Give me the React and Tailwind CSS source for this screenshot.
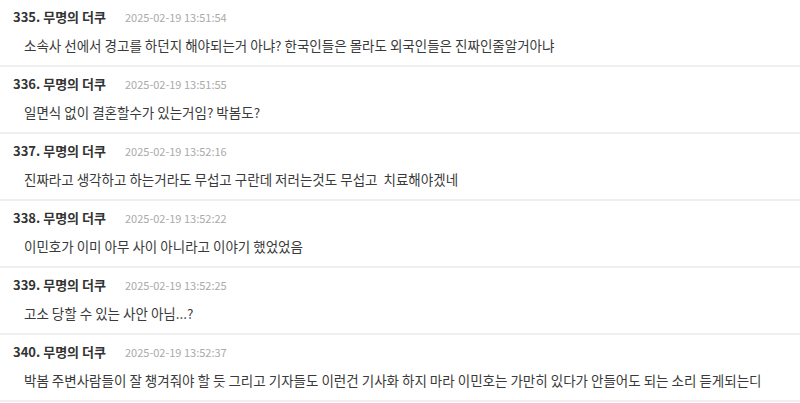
const comments = [
  { no: 335, time: "2025-02-19 13:51:54", text: "소속사 선에서 경고를 하던지 해야되는거 아냐? 한국인들은 몰라도 외국인들은 진짜인줄알거아냐" },
  { no: 336, time: "2025-02-19 13:51:55", text: "일면식 없이 결혼할수가 있는거임? 박봄도?" },
  { no: 337, time: "2025-02-19 13:52:16", text: "진짜라고 생각하고 하는거라도 무섭고 구란데 저러는것도 무섭고  치료해야겠네" },
  { no: 338, time: "2025-02-19 13:52:22", text: "이민호가 이미 아무 사이 아니라고 이야기 했었었음" },
  { no: 339, time: "2025-02-19 13:52:25", text: "고소 당할 수 있는 사안 아님...?" },
  { no: 340, time: "2025-02-19 13:52:37", text: "박봄 주변사람들이 잘 챙겨줘야 할 듯 그리고 기자들도 이런건 기사화 하지 마라 이민호는 가만히 있다가 안들어도 되는 소리 듣게되는디" },
];

export default function App() {
  return (
    <div
      className="w-[800px] h-[403px] overflow-hidden bg-white"
      style={{ fontFamily: '"Noto Sans CJK KR", "Noto Sans", sans-serif' }}
    >
      {comments.map((c) => (
        <div key={c.no} className="border-b-2 border-[#efefef] pt-[9px] pb-[10px]">
          <div className="flex items-center h-4 pl-[13px]">
            <span className="text-[13px] font-bold text-[#333] w-[112px] whitespace-nowrap">
              {c.no}. 무명의 더쿠
            </span>
            <span className="text-[11px] text-[#aaa] whitespace-nowrap">{c.time}</span>
          </div>
          <div className="mt-[10px] h-5 pl-6 text-[13.5px] leading-5 text-[#3a3a3a] whitespace-pre">
            {c.text}
          </div>
        </div>
      ))}
    </div>
  );
}
